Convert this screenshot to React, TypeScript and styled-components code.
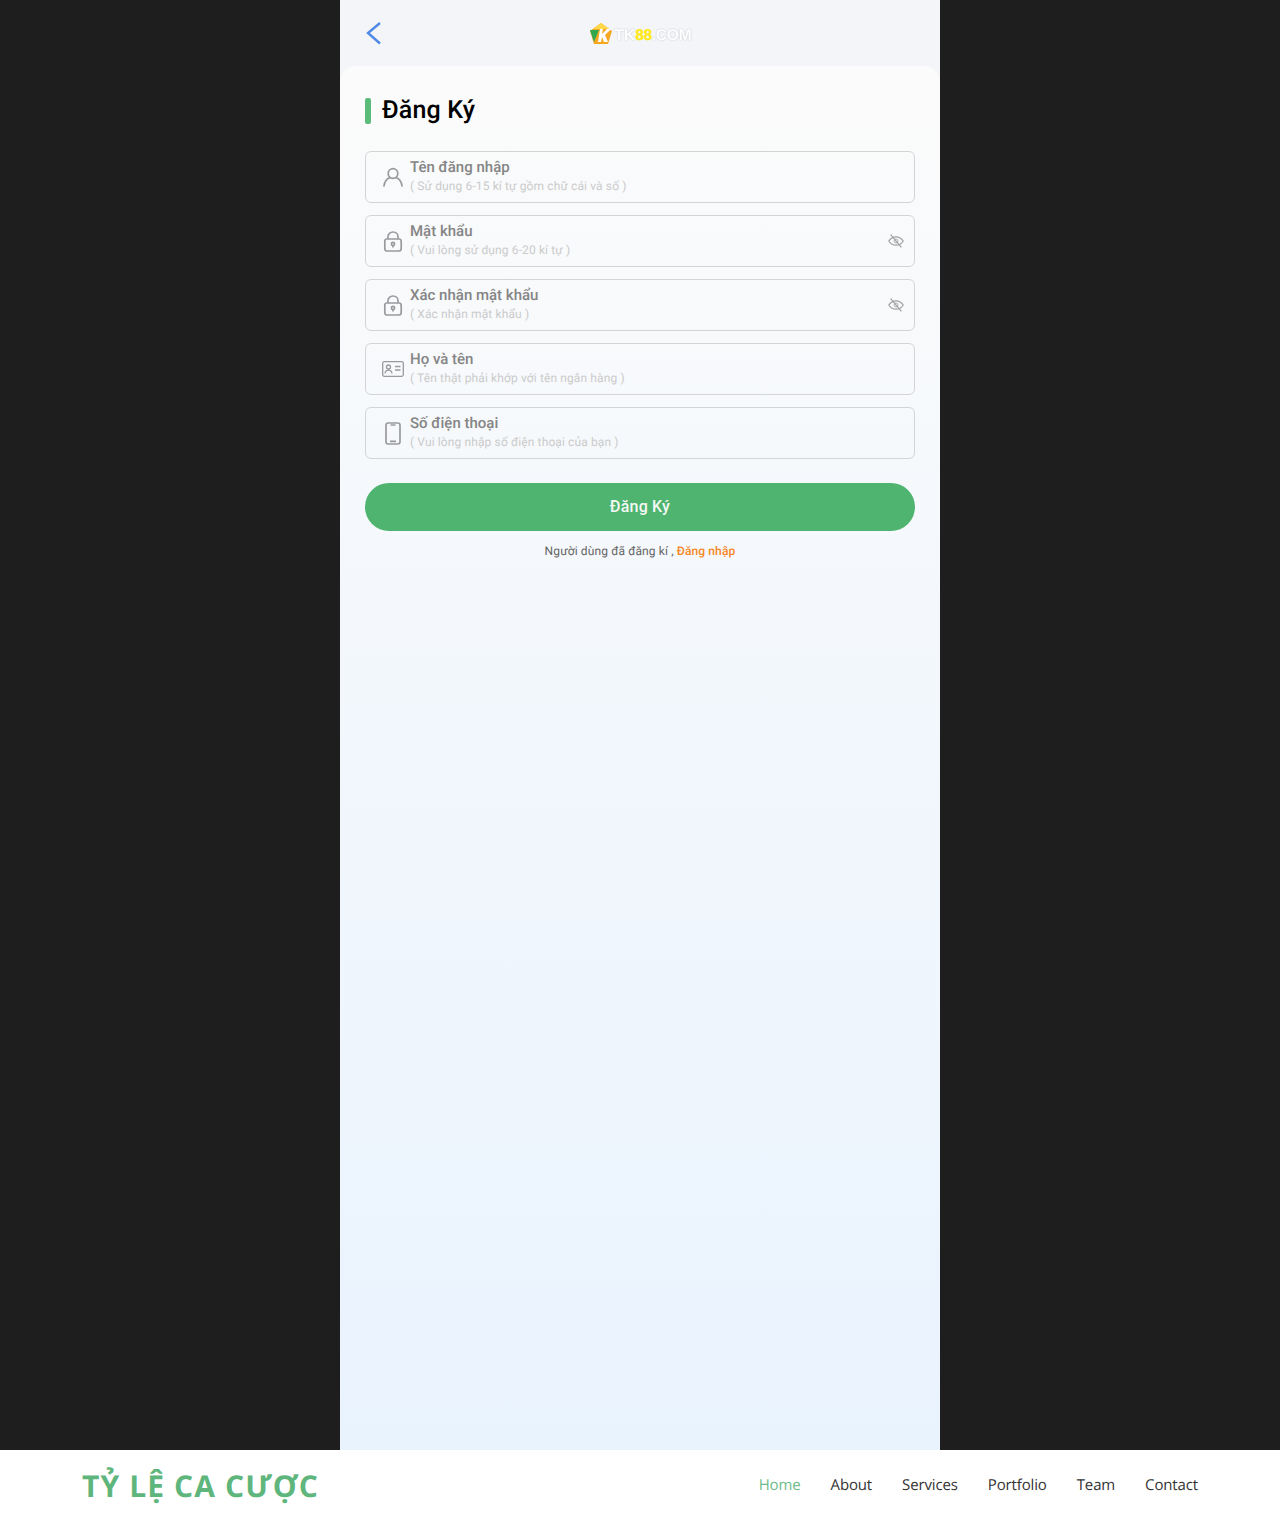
import React from "react";
import styled, { createGlobalStyle } from "styled-components";

const GlobalStyle = createGlobalStyle`
  html, body {
    margin: 0;
    padding: 0;
    background: #fff;
    text-rendering: geometricPrecision;
  }
  * {
    box-sizing: border-box;
  }
`;

const Stage = styled.div`
  height: 1450px;
  background: #1e1e1e;
  display: flex;
  justify-content: center;
`;

const Phone = styled.main`
  width: 600px;
  background: #f3f5f8;
  display: flex;
  flex-direction: column;
  font-family: Roboto, "Liberation Sans", sans-serif;
`;

const TopBar = styled.header`
  position: relative;
  height: 66px;
  flex: none;
  display: flex;
  align-items: center;
  justify-content: center;
`;

const BackButton = styled.button`
  position: absolute;
  left: 24px;
  top: 19px;
  width: 20px;
  height: 28px;
  padding: 0;
  border: 0;
  background: none;
  display: flex;
`;

const Logo = styled.div`
  display: flex;
  align-items: center;
  gap: 2px;
  margin-top: 2px;
  filter: blur(0.5px);
`;

const LogoText = styled.span`
  font-family: "Liberation Sans", sans-serif;
  font-size: 15.5px;
  font-weight: 700;
  margin-top: 3px;
  letter-spacing: -0.2px;
  color: #fff;
  text-shadow: 0 0 1px #c2c7cc, 0 0 2px #d0d4d8;
`;

const LogoGold = styled.span`
  color: #ffe81f;
  text-shadow: 0 0 1px #ffe81f;
`;

const Card = styled.section`
  flex: 1;
  padding: 32px 25px 0;
  border-radius: 16px 16px 0 0;
  background: linear-gradient(180deg, #fbfbfb 0%, #e9f3fe 100%);
`;

const Title = styled.h1`
  margin: 0 0 27px;
  height: 26px;
  display: flex;
  align-items: center;
  gap: 11px;
  font-size: 25px;
  line-height: 26px;
  font-weight: 500;
  letter-spacing: 0.15px;
  color: #000;

  &::before {
    content: "";
    width: 6px;
    height: 26px;
    border-radius: 2px;
    background: #5bbb7b;
  }
`;

const Fields = styled.div`
  display: flex;
  flex-direction: column;
  gap: 12px;
`;

const Field = styled.label`
  height: 52px;
  display: flex;
  align-items: center;
  padding: 0 10px 0 16px;
  border: 1px solid #d2d4d6;
  border-radius: 6px;
`;

const FieldIcon = styled.span`
  width: 22px;
  height: 24px;
  flex: none;
  margin-right: 6px;
  display: flex;
  align-items: center;
  justify-content: center;
`;

const FieldText = styled.div`
  flex: 1;
  display: flex;
  flex-direction: column;
  margin-bottom: 4px;
`;

const FieldLabel = styled.span`
  font-size: 15px;
  line-height: 20px;
  font-weight: 500;
  color: #858585;
`;

const FieldHint = styled.span`
  font-size: 12px;
  line-height: 16px;
  margin-top: 1px;
  letter-spacing: 0.12px;
  color: #cbcbcb;
`;

const EyeButton = styled.span`
  width: 16px;
  height: 16px;
  flex: none;
  display: flex;
`;

const Submit = styled.button`
  width: 100%;
  height: 48px;
  margin-top: 24px;
  padding: 0 0 2px;
  border: 0;
  border-radius: 24px;
  background: #4fb46f;
  color: #f4f8f5;
  font-family: inherit;
  font-size: 16px;
  font-weight: 500;
  letter-spacing: 0.2px;
`;

const LoginHint = styled.p`
  margin: 12px 0 0;
  text-align: center;
  font-size: 12px;
  line-height: 16px;
  letter-spacing: 0.12px;
  color: #666;
`;

const LoginLink = styled.a`
  color: #f5871f;
  font-weight: 500;
`;

const Footer = styled.footer`
  height: 70px;
  background: #fff;
  padding: 0 82px;
  display: flex;
  align-items: center;
  justify-content: space-between;
  font-family: "Open Sans", sans-serif;
`;

const Brand = styled.div`
  font-size: 30px;
  font-weight: 700;
  letter-spacing: 1.1px;
  color: #5fb67c;
`;

const Nav = styled.nav`
  display: flex;
  gap: 30px;
`;

const NavLink = styled.a<{ $active?: boolean }>`
  font-size: 15px;
  letter-spacing: -0.14px;
  color: ${(p) => (p.$active ? "#6dbb88" : "#333")};
`;

const stroke = { fill: "none", stroke: "#9a9a9e", strokeWidth: 1.7 };

const UserIcon = () => (
  <svg width="20" height="20" viewBox="0 0 20 20" {...stroke}>
    <circle cx="10" cy="6.500" r="4.800" />
    <path d="M1 19c.4-4.800 3.400-8 6-8.400M19 19c-.4-4.800-3.400-8-6-8.400" strokeLinecap="round" />
  </svg>
);

const LockIcon = () => (
  <svg width="20" height="21" viewBox="0 0 20 21" {...stroke}>
    <rect x="1.800" y="8" width="16.400" height="12" rx="2.200" />
    <path d="M5 8V5.600C5 3 7.200 1 10 1s5 2 5 4.600V8" />
    <circle cx="10" cy="13" r="1.600" />
    <path d="M10 14.600v2" />
  </svg>
);

const CardIcon = () => (
  <svg width="22" height="16" viewBox="0 0 22 16" {...stroke} strokeWidth={1.3}>
    <rect x="0.700" y="0.700" width="20.600" height="14.600" rx="1.500" />
    <circle cx="6.500" cy="6" r="2" />
    <path d="M3 12.500c.3-2.200 1.700-3.300 3.500-3.300s3.200 1.100 3.500 3.300M13 5.500h5.500M13 9h5.500" />
  </svg>
);

const PhoneIcon = () => (
  <svg width="16" height="23" viewBox="0 0 16 23" {...stroke}>
    <rect x="1" y="1" width="14" height="21" rx="2.200" />
    <path d="M5.500 3h5M5 19.400h6" />
  </svg>
);

const EyeOffIcon = () => (
  <svg width="16" height="16" viewBox="0 0 16 16" fill="none" stroke="#a2a2a2" strokeWidth="1.300">
    <path d="M.8 8C2.600 5.200 5 3.800 8 3.800s5.400 1.400 7.200 4.200c-1.800 2.800-4.200 4.200-7.200 4.200S2.600 10.800.8 8z" />
    <circle cx="8" cy="8" r="2" strokeWidth="0.800" />
    <path d="M2.600 1.600l10.800 12.800" />
  </svg>
);

const fields = [
  { label: "Tên đăng nhập", hint: "( Sử dụng 6-15 kí tự gồm chữ cái và số )", icon: <UserIcon /> },
  { label: "Mật khẩu", hint: "( Vui lòng sử dụng 6-20 kí tự )", icon: <LockIcon />, eye: true },
  { label: "Xác nhận mật khẩu", hint: "( Xác nhận mật khẩu )", icon: <LockIcon />, eye: true },
  { label: "Họ và tên", hint: "( Tên thật phải khớp với tên ngân hàng )", icon: <CardIcon /> },
  { label: "Số điện thoại", hint: "( Vui lòng nhập số điện thoại của bạn )", icon: <PhoneIcon /> },
];

const navItems = ["Home", "About", "Services", "Portfolio", "Team", "Contact"];

const App: React.FC = () => {
  return (
    <>
      <GlobalStyle />
      <Stage>
        <Phone>
          <TopBar>
            <BackButton aria-label="Back">
              <svg width="20" height="28" viewBox="0 0 20 28" fill="none" stroke="#4f8ae6" strokeWidth="2.400">
                <path d="M16 4 4 14l12 10.500" />
              </svg>
            </BackButton>
            <Logo>
              <svg width="24" height="24" viewBox="0 0 24 24">
                <path d="M12 1 23 9l-4 13H5L1 9z" fill="#f7a823" />
                <path d="M12 1 20 7H4z" fill="#ffd84a" />
                <path d="M1 8h9L5 20z" fill="#2fa84f" />
                <path d="M9 20 11 7h3l-1 5 5-5h4l-6 6 3 7h-4l-2-5-1 5z" fill="#fff" />
              </svg>
              <LogoText>
                TK<LogoGold>88</LogoGold>.COM
              </LogoText>
            </Logo>
          </TopBar>
          <Card>
            <Title>Đăng Ký</Title>
            <Fields>
              {fields.map((f) => (
                <Field key={f.label}>
                  <FieldIcon>{f.icon}</FieldIcon>
                  <FieldText>
                    <FieldLabel>{f.label}</FieldLabel>
                    <FieldHint>{f.hint}</FieldHint>
                  </FieldText>
                  {f.eye && (
                    <EyeButton>
                      <EyeOffIcon />
                    </EyeButton>
                  )}
                </Field>
              ))}
            </Fields>
            <Submit>Đăng Ký</Submit>
            <LoginHint>
              Người dùng đã đăng kí , <LoginLink>Đăng nhập</LoginLink>
            </LoginHint>
          </Card>
        </Phone>
      </Stage>
      <Footer>
        <Brand>TỶ LỆ CA CƯỢC</Brand>
        <Nav>
          {navItems.map((item) => (
            <NavLink key={item} $active={item === "Home"}>
              {item}
            </NavLink>
          ))}
        </Nav>
      </Footer>
    </>
  );
};

export default App;
